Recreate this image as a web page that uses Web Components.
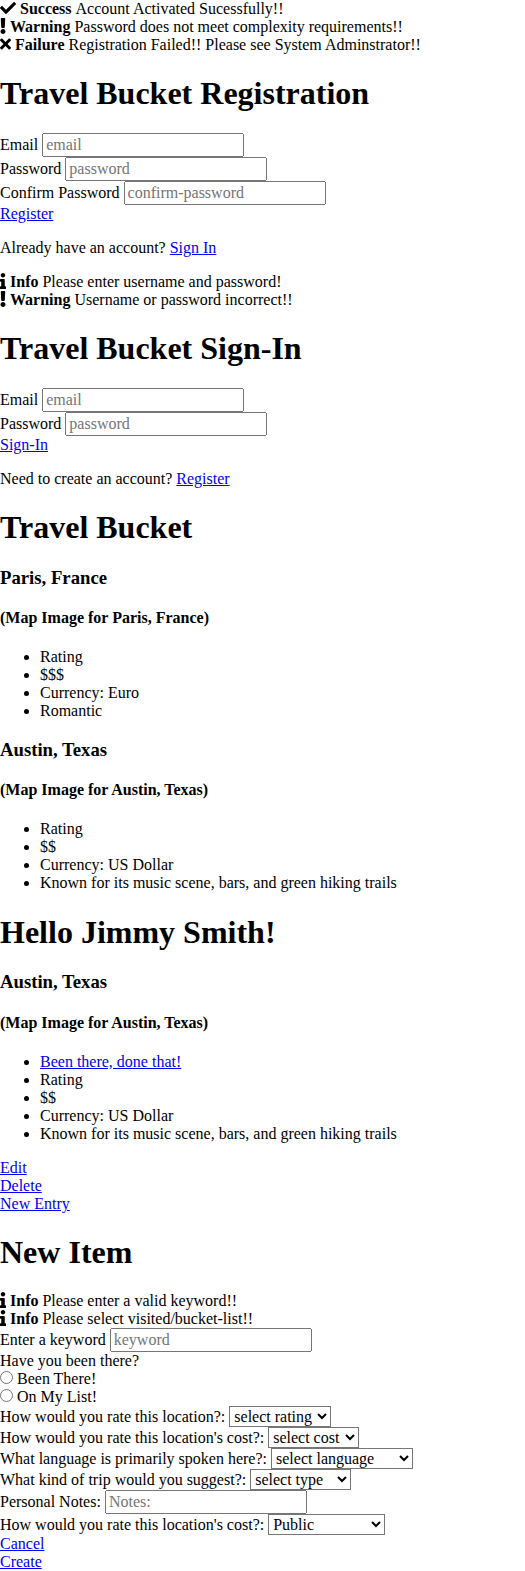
<!DOCTYPE html>
<html lang="en">
<head>
<meta charset="utf-8">
<title>Travel Bucket</title>
<style>
body { margin: 0; background: #fff; color: #000; font: 16px/18px "Liberation Serif", "Times New Roman", serif; }
</style>
</head>
<body>
<travel-app></travel-app>
<script>
const define = (name, render) => customElements.define(name, class extends HTMLElement {
  connectedCallback() {
    if (this.shadowRoot) return;
    this.attachShadow({ mode: 'open' }).innerHTML = render(this);
  }
});

const icons = {
  Success: [512, 'M173.898 439.404l-166.4-166.4c-9.997-9.997-9.997-26.206 0-36.204l36.203-36.204c9.997-9.998 26.207-9.998 36.204 0L192 312.69 432.095 72.596c9.997-9.997 26.207-9.997 36.204 0l36.203 36.204c9.997 9.997 9.997 26.206 0 36.204l-294.4 294.401c-9.998 9.997-26.207 9.997-36.204-.001z'],
  Warning: [192, 'M176 432c0 44.112-35.888 80-80 80s-80-35.888-80-80 35.888-80 80-80 80 35.888 80 80zM25.26 25.199l13.6 272C39.499 309.972 50.041 320 62.83 320h66.34c12.789 0 23.331-10.028 23.97-22.801l13.6-272C167.425 11.49 156.496 0 142.77 0H49.23C35.504 0 24.575 11.49 25.26 25.199z'],
  Failure: [352, 'M242.72 256l100.07-100.07c12.28-12.28 12.28-32.19 0-44.48l-22.24-22.24c-12.28-12.28-32.19-12.28-44.48 0L176 189.28 75.93 89.21c-12.28-12.28-32.19-12.28-44.48 0L9.21 111.45c-12.28 12.28-12.28 32.19 0 44.48L109.28 256 9.21 356.07c-12.28 12.28-12.28 32.19 0 44.48l22.24 22.24c12.28 12.28 32.2 12.28 44.48 0L176 322.72l100.07 100.07c12.28 12.28 32.2 12.28 44.48 0l22.24-22.24c12.28-12.28 12.28-32.19 0-44.48L242.72 256z'],
  Info: [192, 'M20 424.229h20V279.771H20c-11.046 0-20-8.954-20-20V212c0-11.046 8.954-20 20-20h112c11.046 0 20 8.954 20 20v212.229h20c11.046 0 20 8.954 20 20V492c0 11.046-8.954 20-20 20H20c-11.046 0-20-8.954-20-20v-47.771c0-11.046 8.954-20 20-20zM96 0C56.235 0 24 32.235 24 72s32.235 72 72 72 72-32.235 72-72S135.764 0 96 0z']
};

define('status-message', el => {
  const kind = el.getAttribute('kind');
  const [w, d] = icons[kind];
  return `<style>
    :host { display: flex; height: 18px; white-space: nowrap; }
    svg { flex: none; height: 16px; margin-right: 4px; }
    b { margin-right: 4px; }
  </style><svg width="${w / 32}" height="16" viewBox="0 0 ${w} 512"><path d="${d}"/></svg><b>${kind}</b><span><slot></slot></span>`;
});

define('page-heading', () => `<style>
  :host { display: block; }
  h1 { font-size: 32px; line-height: 36px; margin: 21.44px 0; }
</style><h1><slot></slot></h1>`);

define('action-link', el => `<style>
  :host { display: block; }
  :host([inline]) { display: inline; }
  a { color: #0000ee; text-decoration: underline; }
</style><a href="#"><slot></slot></a>`);

define('account-prompt', () => `<style>
  :host { display: block; }
  p { margin: 16px 0; }
</style><p><slot></slot></p>`);

define('text-field', el => `<style>
  :host { display: block; }
  label { display: flex; gap: 4px; height: 24px; line-height: 24px; white-space: nowrap; }
  input { box-sizing: border-box; width: 202px; height: 24px; margin: 0; font: inherit; line-height: 18px; }
</style><label><span><slot></slot></span><input placeholder="${el.getAttribute('placeholder')}"></label>`);

define('select-field', el => `<style>
  :host { display: block; }
  label { display: flex; gap: 4px; height: 21px; line-height: 21px; white-space: nowrap; }
  select { box-sizing: border-box; width: ${el.getAttribute('width')}px; height: 21px; margin: 0; font: inherit; line-height: 18px; background: #fff; color: #000; border: 1px solid #767676; border-radius: 0; }
</style><label><span><slot></slot></span><select><option>${el.getAttribute('value')}</option></select></label>`);

define('radio-choice', () => `<style>
  :host { display: block; }
  label { display: flex; gap: 4px; height: 18px; }
  input { width: 13px; height: 13px; margin: 1px 0 0; }
</style><label><input type="radio" name="visited"><span><slot></slot></span></label>`);

define('place-entry', el => `<style>
  :host { display: block; }
  h3 { font-size: 18.72px; line-height: 21px; margin: 18.72px 0; }
  h4 { font-size: 16px; margin: 21.28px 0; }
  ul { margin: 16px 0; padding-left: 40px; }
</style>
<h3>${el.getAttribute('place')}</h3>
<h4>(Map Image for ${el.getAttribute('place')})</h4>
<ul><slot></slot></ul>`);

define('place-fact', () => `<style>
  :host { display: list-item; list-style: disc; }
</style><slot></slot>`);

define('travel-app', () => `<style>:host { display: block; } section { display: block; }</style>
<section>
  <status-message kind="Success">Account Activated Sucessfully!!</status-message>
  <status-message kind="Warning">Password does not meet complexity requirements!!</status-message>
  <status-message kind="Failure">Registration Failed!! Please see System Adminstrator!!</status-message>
  <page-heading>Travel Bucket Registration</page-heading>
  <text-field placeholder="email">Email</text-field>
  <text-field placeholder="password">Password</text-field>
  <text-field placeholder="confirm-password">Confirm Password</text-field>
  <action-link>Register</action-link>
  <account-prompt>Already have an account? <action-link inline>Sign In</action-link></account-prompt>
</section>
<section>
  <status-message kind="Info">Please enter username and password!</status-message>
  <status-message kind="Warning">Username or password incorrect!!</status-message>
  <page-heading>Travel Bucket Sign-In</page-heading>
  <text-field placeholder="email">Email</text-field>
  <text-field placeholder="password">Password</text-field>
  <action-link>Sign-In</action-link>
  <account-prompt>Need to create an account? <action-link inline>Register</action-link></account-prompt>
</section>
<section>
  <page-heading>Travel Bucket</page-heading>
  <place-entry place="Paris, France">
    <place-fact>Rating</place-fact><place-fact>$$$</place-fact><place-fact>Currency: Euro</place-fact><place-fact>Romantic</place-fact>
  </place-entry>
  <place-entry place="Austin, Texas">
    <place-fact>Rating</place-fact><place-fact>$$</place-fact><place-fact>Currency: US Dollar</place-fact><place-fact>Known for its music scene, bars, and green hiking trails</place-fact>
  </place-entry>
</section>
<section>
  <page-heading>Hello Jimmy Smith!</page-heading>
  <place-entry place="Austin, Texas">
    <place-fact><action-link inline>Been there, done that!</action-link></place-fact><place-fact>Rating</place-fact><place-fact>$$</place-fact><place-fact>Currency: US Dollar</place-fact><place-fact>Known for its music scene, bars, and green hiking trails</place-fact>
  </place-entry>
  <action-link>Edit</action-link>
  <action-link>Delete</action-link>
  <action-link>New Entry</action-link>
</section>
<section>
  <page-heading>New Item</page-heading>
  <status-message kind="Info">Please enter a valid keyword!!</status-message>
  <status-message kind="Info">Please select visited/bucket-list!!</status-message>
  <text-field placeholder="keyword">Enter a keyword</text-field>
  <div>Have you been there?</div>
  <radio-choice>Been There!</radio-choice>
  <radio-choice>On My List!</radio-choice>
  <select-field width="102" value="select rating">How would you rate this location?:</select-field>
  <select-field width="91" value="select cost">How would you rate this location's cost?:</select-field>
  <select-field width="142" value="select language">What language is primarily spoken here?:</select-field>
  <select-field width="101" value="select type">What kind of trip would you suggest?:</select-field>
  <text-field placeholder="Notes:">Personal Notes:</text-field>
  <select-field width="117" value="Public">How would you rate this location's cost?:</select-field>
  <action-link>Cancel</action-link>
  <action-link>Create</action-link>
</section>`);
</script>
</body>
</html>
